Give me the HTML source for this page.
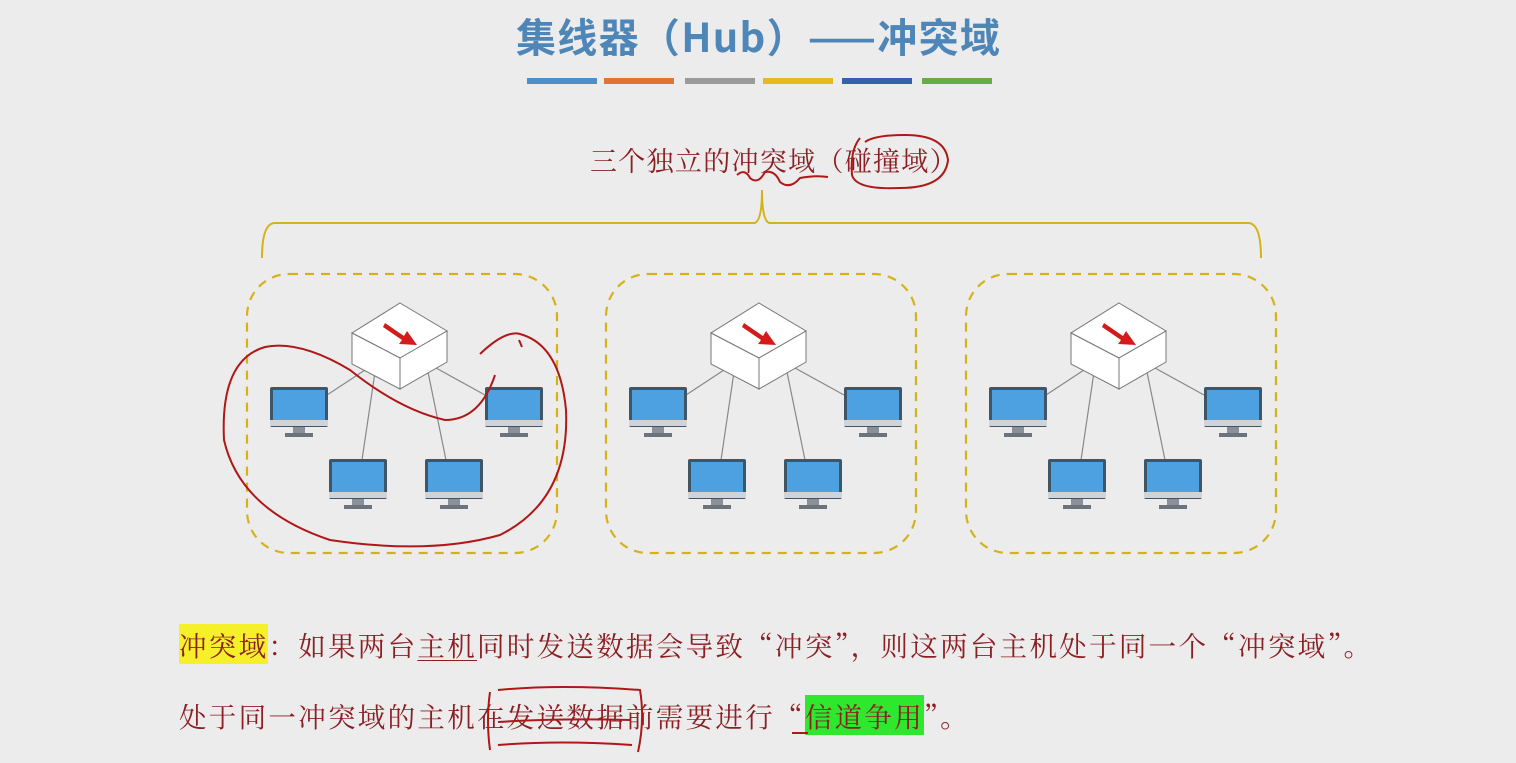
<!DOCTYPE html>
<html><head><meta charset="utf-8"><style>
html,body{margin:0;padding:0;background:#ececec;width:1516px;height:763px;overflow:hidden;position:relative}
.t{position:absolute;white-space:nowrap}
.title{left:516px;top:6px;font:bold 40px "Noto Sans CJK SC","Liberation Sans",sans-serif;color:#4f86b8;letter-spacing:1.3px}
.sub{left:590px;top:140px;font:27px "Noto Serif CJK SC",serif;color:#8b1f24;letter-spacing:1.3px}
.b{left:179px;font:27.5px "Noto Serif CJK SC",serif;color:#8b1f24;letter-spacing:2.3px}
.y{background:#f5f02a}.g{background:#2ee82e}
u{text-decoration-thickness:1px;text-underline-offset:4px}
</style></head><body>
<div class="t title">集线器（Hub）——冲突域</div>
<div class="t sub">三个独立的冲突域（碰撞域）</div>
<div class="t b" style="top:624px"><span class="y">冲突域</span>：如果两台<u>主机</u>同时发送数据会导致“冲突”，则这两台主机处于同一个“冲突域”。</div>
<div class="t b" style="top:695px">处于同一冲突域的主机在发送数据前需要进行“<span class="g">信道争用</span>”。</div>
<svg width="1516" height="763" style="position:absolute;left:0;top:0">
<defs>
<g id="pc">
<rect x="0" y="0" width="58" height="40" rx="2" fill="#3f5568"/>
<rect x="3" y="3" width="52" height="30" fill="#4da1e0"/>
<rect x="0" y="33" width="58" height="6" fill="#d0d3d8"/>
<rect x="23" y="40" width="12" height="7" fill="#8a9099"/>
<rect x="15" y="46" width="28" height="4" fill="#6c737c"/>
</g>
<g id="cl">
<rect x="247" y="274" width="310" height="279" rx="42" fill="none" stroke="#d4b21a" stroke-width="2.2" stroke-dasharray="9,7"/>
<g stroke="#888" stroke-width="1.2">
<line x1="365" y1="370" x2="327" y2="395"/><line x1="375" y1="372" x2="362" y2="460"/>
<line x1="428" y1="372" x2="446" y2="460"/><line x1="436" y1="368" x2="485" y2="395"/>
</g>
<g fill="#fff" stroke="#777" stroke-width="1">
<path d="M400 303 L447 331 L400 358 L352 333 Z"/>
<path d="M352 333 L400 358 L400 389 L352 364 Z"/>
<path d="M400 358 L447 331 L447 362 L400 389 Z"/>
</g>
<path d="M385 323 L404 336 L407 331 L417 345 L399 344 L402 340 L383 327 Z" fill="#d41a1a"/>
<use href="#pc" x="270" y="387"/><use href="#pc" x="485" y="387"/>
<use href="#pc" x="329" y="459"/><use href="#pc" x="425" y="459"/>
</g>
</defs>
<g fill="none" stroke-width="6">
<line x1="527" y1="81" x2="597" y2="81" stroke="#4d8fc8"/>
<line x1="604" y1="81" x2="674" y2="81" stroke="#e07434"/>
<line x1="685" y1="81" x2="755" y2="81" stroke="#9a9a9a"/>
<line x1="763" y1="81" x2="833" y2="81" stroke="#e8b820"/>
<line x1="842" y1="81" x2="912" y2="81" stroke="#3660aa"/>
<line x1="922" y1="81" x2="992" y2="81" stroke="#68ac48"/>
</g>
<path d="M262 258 Q262 223 275 223 L755 223 Q762 220 762 190 Q762 220 769 223 L1248 223 Q1261 223 1261 258" fill="none" stroke="#d4b21a" stroke-width="2"/>
<use href="#cl"/><use href="#cl" x="359"/><use href="#cl" x="719"/>
<g fill="none" stroke="#b01818" stroke-width="2">
<path d="M519 340 L522 347 M480 354 Q505 330 520 334 Q560 345 566 410 Q570 500 500 535 Q430 555 330 540 Q240 510 224 440 Q220 360 265 347 Q300 340 350 370 Q400 410 445 420 Q480 420 495 375"/>
<path d="M737 175 Q745 168 750 178 Q758 185 765 172 Q775 170 780 182 Q790 190 800 178 Q815 175 828 177"/>
<path d="M860 138 Q850 150 852 175 Q856 190 900 188 Q945 188 948 160 Q945 135 905 135 Q875 135 865 142"/>
<path d="M498 690 Q560 684 640 690 Q645 720 638 752 M490 692 Q486 720 490 750 M498 722 Q560 718 630 720 M498 745 Q560 740 632 745 M792 733 L808 733"/>
</g>
</svg>
</body></html>
